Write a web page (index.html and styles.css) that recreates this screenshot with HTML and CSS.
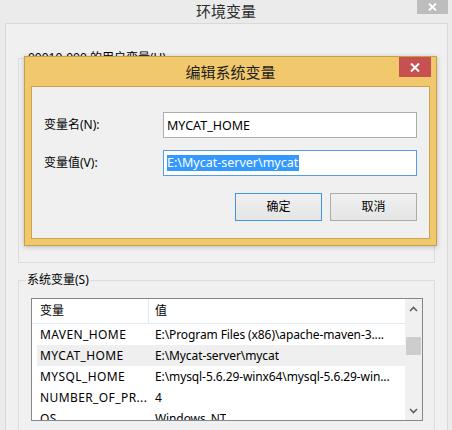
FILE: index.html
```html
<!DOCTYPE html>
<html lang="zh-CN">
<head>
<meta charset="utf-8">
<title>环境变量</title>
<link rel="stylesheet" href="styles.css">
</head>
<body>
<div class="window">
  <div class="titlebar">
    <span></span>
    <div class="title">环境变量</div>
    <div class="close close-gray">
      <svg width="9" height="8" viewBox="0 0 9 8"><path d="M1 0.5 L8 7.5 M8 0.5 L1 7.5" stroke="#fff" stroke-width="1.8" fill="none"/></svg>
    </div>
  </div>
  <div class="panel">
    <div class="group group-user">
      <div class="group-label label-user">00010-000 的用户变量(U)</div>
    </div>
    <div class="group group-sys">
      <div class="group-label">系统变量(S)</div>
      <div class="listbox">
        <div class="list-main">
          <div class="list-header">
            <div class="hcell hname">变量</div>
            <div class="hcell hval">值</div>
          </div>
          <div class="rows">
            <div class="row"><div class="cname">MAVEN_HOME</div><div class="cval">E:\Program Files (x86)\apache-maven-3....</div></div>
            <div class="row sel"><div class="cname">MYCAT_HOME</div><div class="cval">E:\Mycat-server\mycat</div></div>
            <div class="row"><div class="cname">MYSQL_HOME</div><div class="cval">E:\mysql-5.6.29-winx64\mysql-5.6.29-win...</div></div>
            <div class="row"><div class="cname">NUMBER_OF_PR...</div><div class="cval">4</div></div>
            <div class="row"><div class="cname">OS</div><div class="cval">Windows_NT</div></div>
          </div>
        </div>
        <div class="scrollbar">
          <div class="sb-btn">
            <svg width="9" height="6" viewBox="0 0 9 6"><polyline points="1,5 4.5,1.5 8,5" stroke="#606060" stroke-width="1.6" fill="none"/></svg>
          </div>
          <div class="sb-track"><div class="thumb"></div></div>
          <div class="sb-btn">
            <svg width="9" height="6" viewBox="0 0 9 6"><polyline points="1,1 4.5,4.5 8,1" stroke="#606060" stroke-width="1.6" fill="none"/></svg>
          </div>
        </div>
      </div>
    </div>
  </div>

  <div class="dialog">
    <div class="dlg-titlebar">
      <span></span>
      <div class="dlg-title">编辑系统变量</div>
      <div class="close close-red">
        <svg width="10" height="9" viewBox="0 0 10 9"><path d="M1 0.5 L9 8.5 M9 0.5 L1 8.5" stroke="#fff" stroke-width="2" fill="none"/></svg>
      </div>
    </div>
    <div class="client">
      <div class="flabel">变量名(N):</div>
      <div class="field">MYCAT_HOME</div>
      <div class="flabel">变量值(V):</div>
      <div class="field focused"><span class="seltext">E:\Mycat-server\mycat</span></div>
      <div class="buttons">
        <div class="btn btn-default">确定</div>
        <div class="btn">取消</div>
      </div>
    </div>
  </div>
</div>
</body>
</html>
```
FILE: styles.css
```css
* { box-sizing: border-box; }

body {
  margin: 0;
  background: #ebebeb;
  font-family: "Noto Sans", "Noto Sans CJK SC", sans-serif;
  font-size: 12px;
  color: #000;
  overflow: hidden;
}

.window {
  position: relative;
  width: 452px;
  height: 430px;
  overflow: hidden;
}

.titlebar {
  height: 23px;
  display: grid;
  grid-template-columns: 1fr auto 1fr;
  align-items: start;
}

.title {
  font-family: "Noto Sans CJK SC", sans-serif;
  font-size: 15px;
  line-height: 21px;
  color: #2b2b2b;
}

.close {
  display: flex;
  align-items: center;
  justify-content: center;
}

.close-gray {
  justify-self: end;
  width: 31px;
  height: 14px;
  margin-right: 4px;
  background: #bdbdbd;
}

.panel {
  margin-left: 5px;
  width: 443px;
  height: 420px;
  border: 1px solid #d9d9d9;
  background: #f0f0f0;
  padding: 34px 12px 0;
}

.group {
  border: 1px solid #dcdcdc;
  display: flex;
  flex-direction: column;
  align-items: flex-start;
}

.group-user { height: 205px; }

.group-sys {
  margin-top: 17px;
  height: 200px;
}

.group-label {
  margin-top: -9px;
  margin-left: 7px;
  padding: 0 1px;
  line-height: 16px;
  background: #f0f0f0;
  color: #000;
}

.label-user { margin-left: 8px; }

.listbox {
  margin: 10px 0 0 12px;
  width: 392px;
  height: 123px;
  border: 1px solid #828790;
  background: #fff;
  display: flex;
  overflow: hidden;
}

.list-main {
  width: 373px;
  flex: none;
}

.list-header {
  height: 25px;
  display: flex;
  border-bottom: 1px solid #e5eaf0;
}

.hcell { line-height: 24px; }

.hname {
  width: 117px;
  padding-left: 8px;
  border-right: 1px solid #e3e8ef;
}

.hval { padding-left: 6px; }

.rows { padding-left: 5px; }

.row {
  height: 21px;
  line-height: 21px;
  display: flex;
  white-space: nowrap;
}

.row.sel { background: #efefef; }

.cname {
  width: 111px;
  flex: none;
  padding-left: 3px;
  overflow: hidden;
  letter-spacing: 0.4px;
}

.cval {
  padding-left: 7px;
  overflow: hidden;
  letter-spacing: -0.1px;
}

.scrollbar {
  width: 17px;
  flex: none;
  background: #f0f0f0;
  display: flex;
  flex-direction: column;
}

.sb-btn {
  height: 17px;
  display: flex;
  align-items: center;
  justify-content: center;
  padding-top: 2px;
}

.sb-btn:last-child { padding-top: 0; padding-bottom: 1px; }

.sb-track { flex: 1; }

.thumb {
  margin-top: 21px;
  margin-left: 1px;
  width: 15px;
  height: 18px;
  background: #cdcdcd;
}

/* edit dialog window */
.dialog {
  position: absolute;
  left: 24px;
  top: 56px;
  width: 413px;
  height: 190px;
  border: 1px solid #c4a04a;
  background: #f1c86b;
  padding: 0 6px 6px;
  box-shadow: 0 1px 5px rgba(0, 0, 0, 0.22);
}

.dlg-titlebar {
  height: 29px;
  margin: 0 -6px;
  display: grid;
  grid-template-columns: 1fr auto 1fr;
  align-items: start;
}

.dlg-title {
  font-family: "Noto Sans CJK SC", sans-serif;
  font-size: 15px;
  line-height: 30px;
  color: #1e1e1e;
}

.close-red {
  justify-self: end;
  width: 32px;
  height: 20px;
  margin-right: 5px;
  background: #c75050;
}

.client {
  height: 153px;
  border: 1px solid #c9a552;
  background: #f0f0f0;
  padding: 25px 12px 0;
  display: grid;
  grid-template-columns: 119px 254px;
  grid-auto-rows: 26px;
  row-gap: 12px;
  align-items: center;
}

.flabel { line-height: 16px; }

.field {
  height: 26px;
  border: 1px solid #abadb3;
  background: #fff;
  padding-left: 3px;
  line-height: 23px;
  font-size: 12.5px;
  white-space: nowrap;
  display: flex;
  align-items: center;
}

.field.focused { border-color: #569de5; }

.seltext {
  background: #3399ff;
  color: #fff;
  line-height: 16px;
  height: 16px;
  padding-right: 1px;
}

.buttons {
  grid-column: 1 / -1;
  margin-top: 5px;
  height: 28px;
  display: flex;
  justify-content: flex-end;
  gap: 8px;
  align-self: start;
}

.btn {
  width: 87px;
  height: 28px;
  border: 1px solid #acacac;
  background: linear-gradient(#f0f0f0, #e5e5e5);
  text-align: center;
  line-height: 26px;
}

.btn-default { border-color: #3c96ec; }
```
